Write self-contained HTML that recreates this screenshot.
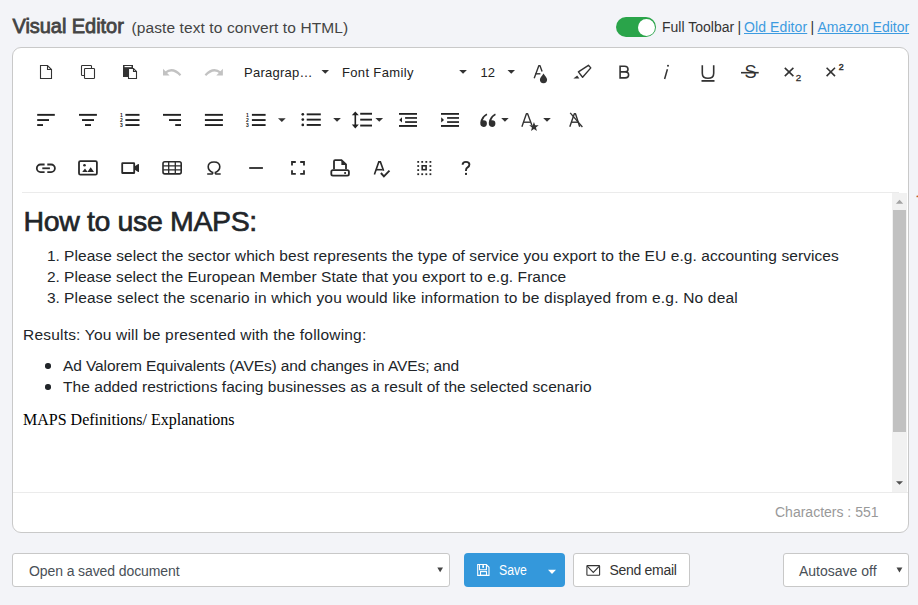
<!DOCTYPE html>
<html><head><meta charset="utf-8">
<style>
html,body{margin:0;padding:0;width:918px;height:605px;overflow:hidden;background:#f3f4f8;font-family:"Liberation Sans",sans-serif;}
.abs{position:absolute;white-space:nowrap;}
#title{left:12.5px;top:14.5px;font-size:20px;color:#444;letter-spacing:-0.05px;-webkit-text-stroke:0.8px #444;}
#sub{left:131.5px;top:18.5px;font-size:15.5px;color:#444;letter-spacing:0.1px;}
#toggle{left:616px;top:17px;width:40px;height:20px;border-radius:10px;background:#2aa44a;}
#knob{left:637.5px;top:18.5px;width:17px;height:17px;border-radius:50%;background:#fff;}
.lk{top:18.5px;font-size:14px;color:#333;}
.lk a{color:#3d9be0;text-decoration:underline;}
#editor{left:12px;top:47px;width:895px;height:484px;border:1px solid #c9c9c9;border-radius:9px;background:#fff;}
#sep1{left:22px;top:192px;width:877px;height:1px;background:#ebebeb;}
#sep2{left:13px;top:492px;width:895px;height:1px;background:#ebebeb;}
#track{left:892px;top:193px;width:15px;height:299px;background:#f1f1f1;}
#thumb{left:893px;top:210px;width:13px;height:222px;background:#c1c1c1;}
.tb{position:absolute;}
.tb svg{position:absolute;left:0;top:0;overflow:visible;}
#content{color:#212529;}
.line{position:absolute;white-space:nowrap;font-size:15.5px;}
#chars{left:775px;top:504px;font-size:14px;color:#999;}
#opensel{left:12px;top:553px;width:436px;height:32px;border:1px solid #c8c8c8;border-radius:3px;background:#fff;}
#savebtn{left:464px;top:553px;width:101px;height:34px;border-radius:4px;background:#3498db;}
#sendbtn{left:573px;top:553px;width:115px;height:32px;border:1px solid #c8c8c8;border-radius:3px;background:#fff;}
#autosel{left:783px;top:553px;width:124px;height:32px;border:1px solid #c8c8c8;border-radius:3px;background:#fff;}
</style></head>
<body>
<div id="title" class="abs">Visual Editor</div>
<div id="sub" class="abs">(paste text to convert to HTML)</div>
<div id="toggle" class="abs"></div>
<div id="knob" class="abs"></div>
<div class="abs lk" style="left:662px;">Full Toolbar</div>
<div class="abs lk" style="left:737.5px;">|</div>
<div class="abs lk" style="left:744px;letter-spacing:0.1px;"><a>Old Editor</a></div>
<div class="abs lk" style="left:810.5px;">|</div>
<div class="abs lk" style="left:817.5px;letter-spacing:-0.02px;"><a>Amazon Editor</a></div>

<div id="editor" class="abs"></div>
<div id="sep1" class="abs"></div>
<div id="sep2" class="abs"></div>
<div id="track" class="abs"></div>
<div id="thumb" class="abs"></div>
<svg class="abs" style="left:880px;top:190px" width="38" height="300" viewBox="880 190 38 300"><path d="M895.9 203.8 H903.2 L899.55 199.8 Z" fill="#a3a3a3"/><path d="M896 481.2 H903 L899.5 484.8 Z" fill="#505050"/><circle cx="917.3" cy="196.4" r="0.9" fill="#c8641e"/></svg>

<svg class="abs" style="left:0;top:0" width="918" height="200" viewBox="0 0 918 200">
<g fill="none" stroke="#333" stroke-width="1.1" stroke-linejoin="miter">
  <!-- new doc -->
  <path d="M40.5 65.5 H47.5 L51.5 69.5 V78.5 H40.5 Z M47.5 65.5 V69.5 H51.5"/>
  <!-- copy -->
  <path d="M84.5 75.5 H82.3 Q81.5 75.5 81.5 74.7 V66.3 Q81.5 65.5 82.3 65.5 H90.7 Q91.5 65.5 91.5 66.3 V68.5"/>
  <rect x="84.5" y="68.5" width="10" height="10" rx="0.8"/>
</g>
<!-- paste -->
<g>
  <rect x="123" y="65" width="10" height="12" fill="#333"/>
  <rect x="124.5" y="66" width="7" height="1.2" fill="#fff"/>
  <path d="M128.5 68.5 H133.5 L136.5 71.5 V78.5 H128.5 Z" fill="#fff" stroke="#333" stroke-width="1.1" stroke-linejoin="miter"/>
  <path d="M133.5 68.5 V71.5 H136.5" fill="none" stroke="#333" stroke-width="1.1"/>
</g>
<!-- undo / redo -->
<g fill="#c2c2c2">
  <path d="M163 68.7 L163 75.5 L169.6 75.5 Z"/>
  <path d="M165.5 72.6 Q172.5 66.8 180.5 75.2" fill="none" stroke="#c2c2c2" stroke-width="2.2"/>
  <path d="M222.9 68.7 L222.9 75.5 L216.3 75.5 Z"/>
  <path d="M220.4 72.6 Q213.4 66.8 205.4 75.2" fill="none" stroke="#c2c2c2" stroke-width="2.2"/>
</g>
<!-- carets -->
<g fill="#333">
  <path d="M321.5 70 H329 L325.25 73.7 Z"/>
  <path d="M459.2 70 H466.9 L463.05 73.7 Z"/>
  <path d="M507.5 70 H515 L511.25 73.7 Z"/>
  <path d="M278 118.2 H285.7 L281.85 121.9 Z"/>
  <path d="M333.2 118 H340.9 L337.05 121.7 Z"/>
  <path d="M375.4 118 H383.1 L379.25 121.7 Z"/>
  <path d="M501.2 118 H508.7 L504.95 121.7 Z"/>
  <path d="M543.2 118 H550.8 L547 121.7 Z"/>
</g>
<!-- text color A with drop -->
<g fill="none" stroke="#333" stroke-width="1.4" stroke-linejoin="round">
  <path d="M534.2 78.3 L538.9 65.6 H539.9 L542.1 71.6"/>
  <path d="M535.3 73.8 H540.4"/>
</g>
<path d="M543.5 73.6 C545 76 547.1 77.8 547.1 79.6 A3.6 3.6 0 0 1 539.9 79.6 C539.9 77.8 542 76 543.5 73.6 Z" fill="#333"/>
<!-- highlighter -->
<path d="M578.4 71.9 L588.4 65.3 L590.8 67.9 L582.6 77.3 Z" fill="none" stroke="#333" stroke-width="1.4" stroke-linejoin="round"/>
<path d="M573.4 78.4 L577.2 75.4 L579.4 78.4 Z" fill="#333"/>
<!-- B -->
<path d="M620.1 66.2 H624.6 Q628 66.2 628 69.2 Q628 71.9 624.8 71.9 H620.1 Z M620.1 71.9 H625.2 Q628.6 71.9 628.6 75 Q628.6 77.9 625.2 77.9 H620.1 Z" fill="none" stroke="#333" stroke-width="1.6"/>
<!-- i -->
<circle cx="668" cy="65.8" r="1" fill="#333"/>
<path d="M667.4 69.2 L664.6 79" stroke="#333" stroke-width="1.5" fill="none"/>
<!-- U -->
<path d="M702.3 65.2 V73.2 Q702.3 78.3 708 78.3 Q713.7 78.3 713.7 73.2 V65.2" fill="none" stroke="#333" stroke-width="1.6"/>
<rect x="701.5" y="80" width="13" height="1.8" fill="#333"/>
<!-- S strike -->
<text x="744.6" y="78.4" font-family="Liberation Sans" font-size="18.2" fill="#333">S</text>
<rect x="741" y="71.9" width="17.7" height="1.6" fill="#333"/>
<!-- sub/superscript -->
<path d="M784.8 67.8 L793.4 76.1 M793.4 67.8 L784.8 76.1" stroke="#333" stroke-width="1.6"/>
<path d="M826.6 67.8 L835 76.1 M835 67.8 L826.6 76.1" stroke="#333" stroke-width="1.6"/>
<text x="795.8" y="81" font-family="Liberation Sans" font-size="9.8" fill="#333" stroke="#333" stroke-width="0.3">2</text>
<text x="838.8" y="69.8" font-family="Liberation Sans" font-size="8.8" fill="#333" stroke="#333" stroke-width="0.5">2</text>

<!-- ROW 2 -->
<g fill="#222">
  <!-- align left -->
  <rect x="37.2" y="113.9" width="17.6" height="1.9"/>
  <rect x="37.2" y="119.1" width="11.8" height="1.9"/>
  <rect x="37.2" y="124.1" width="5.8" height="1.9"/>
  <!-- align center -->
  <rect x="79" y="113.9" width="17.9" height="1.9"/>
  <rect x="82" y="119.1" width="12" height="1.9"/>
  <rect x="85" y="124.1" width="6" height="1.9"/>
  <!-- ol -->
  <rect x="125.4" y="113.9" width="14.1" height="1.9"/>
  <rect x="125.4" y="119.1" width="14.1" height="1.9"/>
  <rect x="125.4" y="124.1" width="14.1" height="1.9"/>
  <!-- align right -->
  <rect x="163" y="113.9" width="18" height="1.9"/>
  <rect x="169" y="119.1" width="12" height="1.9"/>
  <rect x="175.2" y="124.1" width="5.8" height="1.9"/>
  <!-- justify -->
  <rect x="204.9" y="113.9" width="18" height="1.9"/>
  <rect x="204.9" y="119.1" width="18" height="1.9"/>
  <rect x="204.9" y="124.1" width="18" height="1.9"/>
  <!-- ol 2 -->
  <rect x="251.9" y="113.9" width="13.7" height="1.9"/>
  <rect x="251.9" y="119.1" width="13.7" height="1.9"/>
  <rect x="251.9" y="124.1" width="13.7" height="1.9"/>
  <!-- ul -->
  <circle cx="302.8" cy="114.3" r="1.35"/>
  <circle cx="302.8" cy="119.6" r="1.35"/>
  <circle cx="302.8" cy="124.9" r="1.35"/>
  <rect x="306.7" y="113.4" width="14.1" height="1.9"/>
  <rect x="306.7" y="118.7" width="14.1" height="1.9"/>
  <rect x="306.7" y="124" width="14.1" height="1.9"/>
  <!-- line height -->
  <rect x="360.2" y="112.8" width="11.8" height="1.9"/>
  <rect x="360.2" y="118.7" width="11.8" height="1.9"/>
  <rect x="360.2" y="124.6" width="11.8" height="1.9"/>
  <rect x="354.5" y="113" width="1.6" height="14"/>
  <path d="M351.8 115.2 L355.3 111.4 L358.8 115.2 Z M351.8 124.6 L355.3 128.4 L358.8 124.6 Z"/>
  <!-- outdent -->
  <rect x="399" y="113" width="18" height="1.8"/>
  <rect x="405.1" y="117.1" width="11.9" height="1.7"/>
  <rect x="405.1" y="121.2" width="11.9" height="1.7"/>
  <rect x="399" y="125" width="18" height="1.9"/>
  <path d="M399.2 120 L402 117.3 V122.6 Z"/>
  <!-- indent -->
  <rect x="441" y="113" width="18" height="1.8"/>
  <rect x="447.1" y="117.1" width="11.9" height="1.7"/>
  <rect x="447.1" y="121.2" width="11.9" height="1.7"/>
  <rect x="441" y="125" width="18" height="1.9"/>
  <path d="M444 120 L441.2 117.3 V122.6 Z"/>
</g>
<g font-family="Liberation Sans" font-weight="bold" font-size="5" fill="#222">
  <text x="120" y="117.2">1</text><text x="120" y="122.4">2</text><text x="120" y="127.4">3</text>
  <text x="246" y="117.2">1</text><text x="246" y="122.4">2</text><text x="246" y="127.4">3</text>
</g>
<!-- quote 66 -->
<g fill="#2f2f2f">
  <path d="M486.6 113.6 Q481 116.5 480.3 122.6 Q480 126.9 483.6 126.9 Q486.9 126.9 486.9 123.5 Q486.9 120.2 483.6 120.2 Q483.1 120.2 482.8 120.3 Q483.8 116.6 487.3 115 Z"/>
  <path d="M495.1 113.6 Q489.5 116.5 488.8 122.6 Q488.5 126.9 492.1 126.9 Q495.4 126.9 495.4 123.5 Q495.4 120.2 492.1 120.2 Q491.6 120.2 491.3 120.3 Q492.3 116.6 495.8 115 Z"/>
</g>
<!-- A star -->
<g fill="none" stroke="#333" stroke-width="1.4" stroke-linejoin="round">
  <path d="M521.9 126.8 L526.4 113.8 H527.6 L531.8 125"/>
  <path d="M523.4 122.2 H530.3"/>
  <!-- clear format -->
  <path d="M569.8 126.8 L574.3 113.8 H575.5 L579.7 126.8"/>
  <path d="M571.3 122.2 H578.2"/>
  <path d="M570.2 112.8 L582.4 127" stroke-width="1.3"/>
</g>
<path d="M533.95 121.90 L535.18 125.20 L538.71 125.35 L535.95 127.55 L536.89 130.95 L533.95 129.00 L531.01 130.95 L531.95 127.55 L529.19 125.35 L532.72 125.20 Z" fill="#333"/>

<!-- ROW 3 -->
<g fill="none" stroke="#2a2a2a" stroke-width="1.8">
  <!-- link -->
  <path d="M44.6 164.5 H40.6 A3.8 3.8 0 0 0 40.6 172.1 H44.6"/>
  <path d="M47.3 164.5 H51.1 A3.8 3.8 0 0 1 51.1 172.1 H47.3"/>
  <path d="M42.3 168.3 H49.9"/>
  <!-- image -->
  <rect x="79" y="161.1" width="17.9" height="13.5" rx="1.4"/>
  <!-- video -->
  <rect x="122.2" y="163.2" width="12" height="9.8" rx="0.3"/>
  <!-- table -->
  <rect x="163" y="161.8" width="18.2" height="12.1" rx="1.8" stroke-width="1.6"/>
  <path d="M168.7 161.8 V173.9 M175.3 161.8 V173.9 M163.1 165.8 H181.2 M163.1 169.9 H181.2" stroke-width="1.3"/>
  <!-- omega -->
  <path d="M212.6 174 V172.4 Q208.2 170.6 208.2 166.8 Q208.2 162 214 162 Q219.8 162 219.8 166.8 Q219.8 170.6 215.4 172.4 V174 M207.2 174 H212.8 M215.2 174 H220.7" stroke-width="1.6"/>
  <!-- hr -->
  <path d="M249.2 168 H262.9"/>
  <!-- fullscreen -->
  <path d="M292 165.5 V162 H295.8 M300.2 162 H304 V165.5 M304 170.2 V173.8 H300.2 M295.8 173.8 H292 V170.2" stroke-width="1.8" stroke-linejoin="miter"/>
  <!-- print -->
  <path d="M334 169.3 V161.2 Q334 160.1 335.1 160.1 H341.5 L346 164.4 V169.3"/>
  <rect x="331.3" y="170.2" width="17.6" height="5.4" rx="1.6"/>
  <!-- spellcheck -->
  <path d="M374.4 174.4 L378.8 161.9 H380.4 L383.6 170.8" stroke-width="1.6"/>
  <path d="M375.9 169.7 H382.6" stroke-width="1.6"/>
  <path d="M380.9 173 L383.9 176.3 L389.5 170.6" stroke-width="1.9"/>
  <!-- select all inner -->
  <rect x="422.2" y="165.8" width="3.9" height="3.9" stroke-width="1.6"/>
</g>
<g fill="#2a2a2a">
  <circle cx="84.5" cy="165.3" r="1.3"/>
  <path d="M82.2 171.9 L85 168.6 L87.6 171.9 Z M87.4 171.9 L90.7 167.2 L94 171.9 Z"/>
  <path d="M134.1 166.8 L138.2 164.1 Q139 163.7 139 164.6 V171.6 Q139 172.4 138.2 171.9 L134.1 169.3 Z"/>
  <path d="M341.4 160.4 L346.6 165 H341.4 Z"/>
  <rect x="344.2" y="172.1" width="1.8" height="1.8"/>
  <!-- select all dots -->
  <rect x="417.3" y="161" width="1.8" height="1.8"/><rect x="421.3" y="161" width="1.8" height="1.8"/><rect x="425.4" y="161" width="1.8" height="1.8"/><rect x="429.5" y="161" width="1.8" height="1.8"/>
  <rect x="417.3" y="165.1" width="1.8" height="1.8"/><rect x="429.5" y="165.1" width="1.8" height="1.8"/>
  <rect x="417.3" y="169.2" width="1.8" height="1.8"/><rect x="429.5" y="169.2" width="1.8" height="1.8"/>
  <rect x="417.3" y="173.3" width="1.8" height="1.8"/><rect x="421.3" y="173.3" width="1.8" height="1.8"/><rect x="425.4" y="173.3" width="1.8" height="1.8"/><rect x="429.5" y="173.3" width="1.8" height="1.8"/>
</g>
<!-- ? -->
<path d="M462.6 164.8 Q462.6 161.9 466 161.9 Q469.4 161.9 469.4 164.6 Q469.4 166.4 467.6 167.4 Q466 168.3 466 170.3 V171" fill="none" stroke="#2a2a2a" stroke-width="1.9"/>
<rect x="465" y="172.9" width="2" height="2" fill="#2a2a2a"/>
</svg>
<div class="abs" style="left:244px;top:65px;font-size:13px;color:#222;letter-spacing:0.25px;">Paragrap…</div>
<div class="abs" style="left:342px;top:65px;font-size:13px;color:#222;letter-spacing:0.35px;">Font Family</div>
<div class="abs" style="left:480.5px;top:65px;font-size:13px;color:#222;">12</div>
<div id="content">
<div class="abs" style="left:23.5px;top:205px;font-size:28.5px;letter-spacing:-0.36px;-webkit-text-stroke:0.65px #212529;">How to use MAPS:</div>
<div class="line" style="left:47px;top:247px;">1.</div>
<div class="line" style="left:64px;top:247px;letter-spacing:0.08px;">Please select the sector which best represents the type of service you export to the EU e.g. accounting services</div>
<div class="line" style="left:47px;top:268px;">2.</div>
<div class="line" style="left:64px;top:268px;letter-spacing:0.06px;">Please select the European Member State that you export to e.g. France</div>
<div class="line" style="left:47px;top:289px;">3.</div>
<div class="line" style="left:64px;top:289px;letter-spacing:0.19px;">Please select the scenario in which you would like information to be displayed from e.g. No deal</div>
<div class="line" style="left:23px;top:326px;letter-spacing:0.2px;">Results: You will be presented with the following:</div>
<div class="abs" style="left:45px;top:363px;width:5.5px;height:5.5px;border-radius:50%;background:#212529;"></div>
<div class="line" style="left:63px;top:357px;letter-spacing:-0.1px;">Ad Valorem Equivalents (AVEs) and changes in AVEs; and</div>
<div class="abs" style="left:45px;top:384px;width:5.5px;height:5.5px;border-radius:50%;background:#212529;"></div>
<div class="line" style="left:63px;top:378px;letter-spacing:0.05px;">The added restrictions facing businesses as a result of the selected scenario</div>
<div class="abs" style="left:23px;top:411px;font-family:'Liberation Serif',serif;font-size:16px;color:#000;">MAPS Definitions/ Explanations</div>
</div>

<div id="chars" class="abs">Characters : 551</div>
<div id="opensel" class="abs"></div>
<div class="abs" style="left:29px;top:563px;font-size:14px;color:#495057;letter-spacing:-0.1px;">Open a saved document</div>
<div id="savebtn" class="abs"></div>
<div class="abs" style="left:498.5px;top:562px;font-size:14px;color:#fff;transform:scaleX(0.875);transform-origin:0 0;">Save</div>
<div id="sendbtn" class="abs"></div>
<div class="abs" style="left:609.5px;top:562px;font-size:14px;color:#333;letter-spacing:-0.3px;">Send email</div>
<div id="autosel" class="abs"></div>
<div class="abs" style="left:799px;top:563px;font-size:14px;color:#495057;">Autosave off</div>
<svg class="abs" style="left:0;top:540px" width="918" height="60" viewBox="0 540 918 60">
<path d="M437.3 567.5 H443 L440.15 572.2 Z" fill="#444"/>
<path d="M896.5 567.4 H902.4 L899.45 572.6 Z" fill="#444"/>
<path d="M548 569.7 H556 L552 573.9 Z" fill="#fff"/>
<g fill="none" stroke="#fff" stroke-width="1.1">
  <path d="M477.7 564.5 H486.3 L489 567.3 V575.4 H477.7 Z"/>
  <path d="M479.5 564.5 V569.8 H486.4 V564.8"/>
  <rect x="480.5" y="571.6" width="6" height="3.8"/>
</g>
<rect x="482.3" y="565.2" width="1.7" height="2.6" fill="#fff"/>
<g fill="none" stroke="#333" stroke-width="1.1">
  <rect x="586.9" y="565.6" width="12.7" height="9.7" rx="0.6"/>
  <path d="M587.2 566.2 L593.3 572.4 L599.4 566.2"/>
</g>
</svg>
</body></html>
